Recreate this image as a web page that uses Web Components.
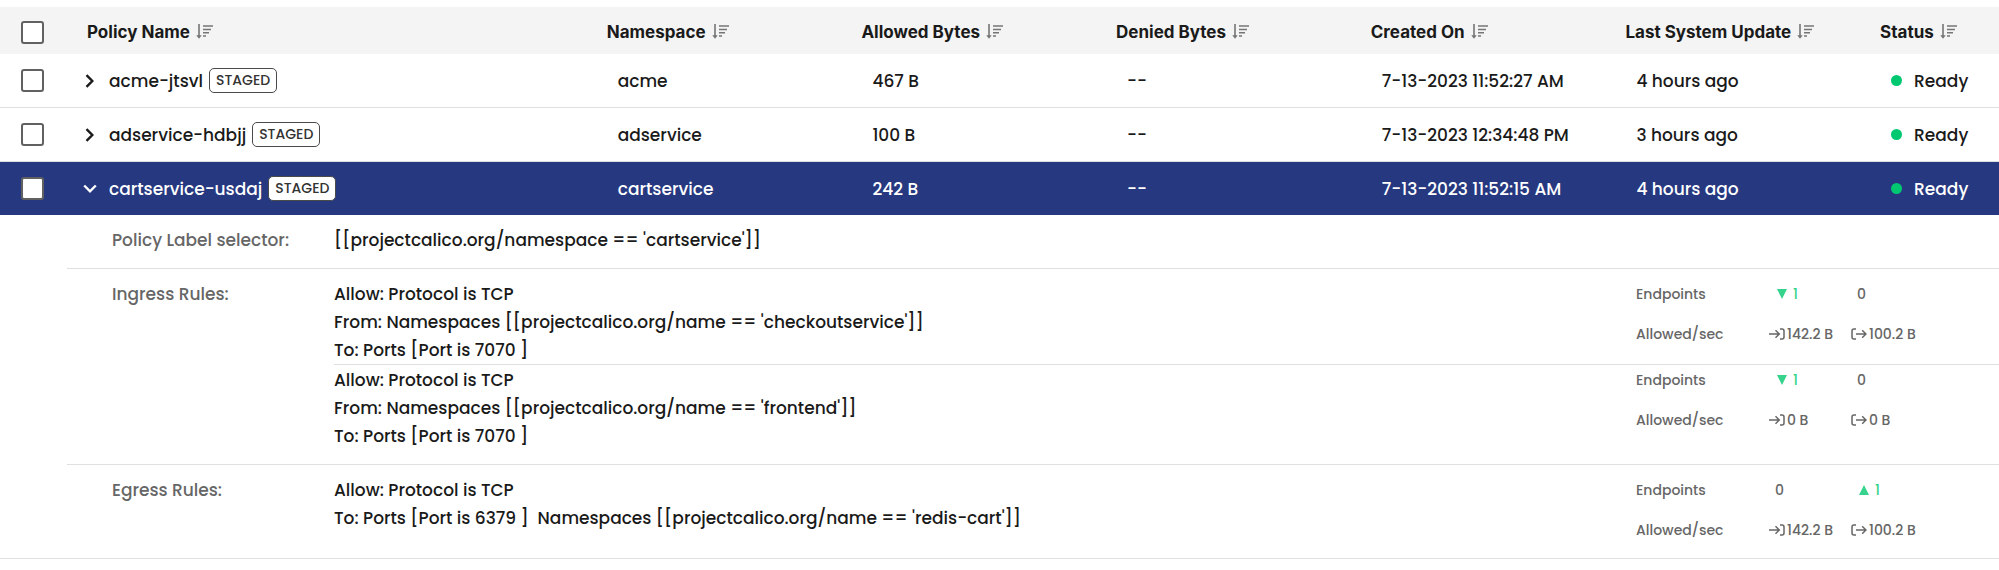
<!DOCTYPE html>
<html lang="en">
<head>
<meta charset="utf-8">
<title>Policies</title>
<style>
  :root {
    --fg: #1a1a1a;
    --fg-muted: #666666;
    --line: #e0e0e0;
    --header-bg: #f4f4f4;
    --selected: #26387f;
    --ready: #00c871;
    --change: #36d38c;
  }
  body {
    margin: 0;
    padding-top: 7px;
    background: #ffffff;
    color: var(--fg);
    font-family: Poppins, Inter, "Open Sans", sans-serif;
    font-size: 17px;
    font-weight: 500;
    line-height: 28px;
  }
</style>
</head>
<body>
<policy-table></policy-table>

<script>
const COLUMNS = [
  "Policy Name",
  "Namespace",
  "Allowed Bytes",
  "Denied Bytes",
  "Created On",
  "Last System Update",
  "Status",
];

const POLICIES = [
  {
    name: "acme-jtsvl",
    namespace: "acme",
    allowed: "467 B",
    denied: "--",
    created: "7-13-2023 11:52:27 AM",
    updated: "4 hours ago",
    status: "Ready",
  },
  {
    name: "adservice-hdbjj",
    namespace: "adservice",
    allowed: "100 B",
    denied: "--",
    created: "7-13-2023 12:34:48 PM",
    updated: "3 hours ago",
    status: "Ready",
  },
  {
    name: "cartservice-usdaj",
    namespace: "cartservice",
    allowed: "242 B",
    denied: "--",
    created: "7-13-2023 11:52:15 AM",
    updated: "4 hours ago",
    status: "Ready",
    details: {
      selector: "[[projectcalico.org/namespace == 'cartservice']]",
      ingress: [
        {
          lines: [
            "Allow: Protocol is TCP",
            "From: Namespaces [[projectcalico.org/name == 'checkoutservice']]",
            "To: Ports [Port is 7070 ]",
          ],
          stats: { down: "1", up: "0", bytesIn: "142.2 B", bytesOut: "100.2 B" },
        },
        {
          lines: [
            "Allow: Protocol is TCP",
            "From: Namespaces [[projectcalico.org/name == 'frontend']]",
            "To: Ports [Port is 7070 ]",
          ],
          stats: { down: "1", up: "0", bytesIn: "0 B", bytesOut: "0 B" },
        },
      ],
      egress: [
        {
          lines: [
            "Allow: Protocol is TCP",
            "To: Ports [Port is 6379 ]  Namespaces [[projectcalico.org/name == 'redis-cart']]",
          ],
          stats: { down: "0", up: "1", bytesIn: "142.2 B", bytesOut: "100.2 B" },
        },
      ],
    },
  },
];

class SortButton extends HTMLElement {
  connectedCallback() {
    this.attachShadow({ mode: "open" });
    this.shadowRoot.innerHTML = `
      <style>
        :host { display: inline-block; }
        button {
          display: flex;
          align-items: center;
          gap: 6px;
          padding: 0;
          border: 0;
          background: none;
          color: inherit;
          font: inherit;
          white-space: nowrap;
          cursor: pointer;
        }
        svg { flex: none; color: #757575; }
      </style>
      <button type="button">
        <slot></slot>
        <svg width="18" height="18" viewBox="0 0 18 18" fill="none" stroke="currentColor" stroke-width="1.6" aria-hidden="true">
          <path d="M3 1V14" />
          <path d="M.3 12.2H5.7L3 15.8Z" fill="currentColor" stroke="none" />
          <path d="M7 3H17M7 6.5H15M7 9.8H13M7 13H10" />
        </svg>
      </button>
    `;
  }
}

class PolicyCheckbox extends HTMLElement {
  connectedCallback() {
    this.attachShadow({ mode: "open" });
    this.shadowRoot.innerHTML = `
      <style>
        :host { display: block; }
        input {
          appearance: none;
          display: block;
          box-sizing: border-box;
          width: 23px;
          height: 23px;
          margin: 0;
          border: 2px solid #616161;
          border-radius: 3px;
          background: #ffffff;
        }
        input:checked { background: var(--selected); }
      </style>
      <input type="checkbox" aria-label="${this.getAttribute("label")}">
    `;
  }
}

class PolicyName extends HTMLElement {
  connectedCallback() {
    this.attachShadow({ mode: "open" });
    this.shadowRoot.innerHTML = `
      <style>
        :host { display: flex; align-items: center; }
        button {
          display: flex;
          justify-content: center;
          width: 16px;
          margin-right: 11px;
          padding: 0;
          border: 0;
          background: none;
          color: inherit;
        }
        svg { flex: none; }
        :host([expanded]) svg { transform: rotate(90deg); }
        .badge {
          box-sizing: border-box;
          height: 25px;
          margin-left: 6px;
          padding: 0 6px;
          border: 1px solid #4a4a4a;
          border-radius: 5px;
          background: #ffffff;
          color: #333333;
          font-size: 14px;
          line-height: 23px;
        }
      </style>
      <button type="button" aria-label="Toggle details" aria-expanded="${this.hasAttribute("expanded")}">
        <svg width="14" height="14" viewBox="0 0 14 14" fill="none" stroke="currentColor" stroke-width="2.4" aria-hidden="true">
          <path d="M3.5 1.2L9.3 7L3.5 12.8" />
        </svg>
      </button>
      <slot></slot>
      <span class="badge">STAGED</span>
    `;
  }
}

class PolicyStatus extends HTMLElement {
  connectedCallback() {
    this.attachShadow({ mode: "open" });
    this.shadowRoot.innerHTML = `
      <style>
        :host { display: flex; align-items: center; gap: 12px; }
        .dot {
          width: 11px;
          height: 11px;
          border-radius: 50%;
          background: var(--ready);
        }
      </style>
      <span class="dot"></span>
      <slot></slot>
    `;
  }
}

class RuleStats extends HTMLElement {
  set stats(stats) {
    this._stats = stats;
  }

  connectedCallback() {
    const { down, up, bytesIn, bytesOut } = this._stats;
    this.attachShadow({ mode: "open" });
    this.shadowRoot.innerHTML = `
      <style>
        :host {
          display: grid;
          grid-template-columns: 133px 82px 1fr;
          align-content: start;
          row-gap: 12px;
          color: var(--fg-muted);
          font-size: 14px;
        }
        .count, .bytes { display: flex; align-items: center; }
        .count { gap: 6px; padding-left: 6px; }
        .bytes { gap: 2px; white-space: nowrap; }
        .changed { padding-left: 8px; color: var(--change); }
      </style>
      <span>Endpoints</span>
      ${this._count(down, "M0 0H10L5 10Z")}
      ${this._count(up, "M0 10H10L5 0Z")}
      <span>Allowed/sec</span>
      <span class="bytes">
        <svg width="16" height="12" viewBox="0 0 16 12" fill="none" stroke="currentColor" stroke-width="1.5" aria-hidden="true">
          <path d="M0 6H10M6.5 2.2L10.3 6L6.5 9.8" />
          <path d="M11 .9H13Q15 .9 15 2.9V9.1Q15 11.1 13 11.1H11" />
        </svg>
        ${bytesIn}
      </span>
      <span class="bytes">
        <svg width="16" height="12" viewBox="0 0 16 12" fill="none" stroke="currentColor" stroke-width="1.5" aria-hidden="true">
          <path d="M5 .9H3Q1 .9 1 2.9V9.1Q1 11.1 3 11.1H5" />
          <path d="M5 6H15M11.2 2.2L15 6L11.2 9.8" />
        </svg>
        ${bytesOut}
      </span>
    `;
  }

  _count(value, arrow) {
    if (value === "0") return `<span class="count">0</span>`;
    return `
      <span class="count changed">
        <svg width="10" height="10" viewBox="0 0 10 10" fill="currentColor" aria-hidden="true"><path d="${arrow}" /></svg>
        ${value}
      </span>
    `;
  }
}

class PolicyRule extends HTMLElement {
  set rule(rule) {
    this._rule = rule;
  }

  connectedCallback() {
    this.attachShadow({ mode: "open" });
    this.shadowRoot.innerHTML = `
      <style>
        :host { display: flex; }
        .lines { flex: 1; }
        .line { white-space: pre; }
        rule-stats { flex: none; width: 363px; }
      </style>
      <div class="lines">
        ${this._rule.lines.map((line) => `<div class="line">${line}</div>`).join("")}
      </div>
    `;
    const stats = document.createElement("rule-stats");
    stats.stats = this._rule.stats;
    this.shadowRoot.append(stats);
  }
}

class DetailSection extends HTMLElement {
  connectedCallback() {
    this.attachShadow({ mode: "open" });
    this.shadowRoot.innerHTML = `
      <style>
        :host {
          display: flex;
          margin-left: 67px;
          padding: 11px 0 14px 45px;
          border-bottom: 1px solid var(--line);
        }
        :host(:last-child) { border-bottom: 0; }
        .label { flex: none; width: 222px; color: var(--fg-muted); }
        .content { flex: 1; }
        ::slotted(policy-rule:not(:last-child)) {
          margin-bottom: 1px;
          border-bottom: 1px solid var(--line);
        }
      </style>
      <div class="label">${this.getAttribute("label")}</div>
      <div class="content"><slot></slot></div>
    `;
  }
}

class PolicyDetails extends HTMLElement {
  set details(details) {
    this._details = details;
  }

  connectedCallback() {
    this.attachShadow({ mode: "open" });
    this.shadowRoot.innerHTML = `
      <style>
        :host { display: block; }
      </style>
      <detail-section label="Policy Label selector:">${this._details.selector}</detail-section>
      <detail-section id="ingress" label="Ingress Rules:"></detail-section>
      <detail-section id="egress" label="Egress Rules:"></detail-section>
    `;
    this._addRules("ingress");
    this._addRules("egress");
  }

  _addRules(id) {
    const section = this.shadowRoot.getElementById(id);
    for (const rule of this._details[id]) {
      const el = document.createElement("policy-rule");
      el.rule = rule;
      section.append(el);
    }
  }
}

class PolicyTable extends HTMLElement {
  connectedCallback() {
    this.attachShadow({ mode: "open" });
    this.shadowRoot.innerHTML = `
      <style>
        :host { display: block; }
        table {
          width: 100%;
          border-collapse: separate;
          border-spacing: 0;
          table-layout: fixed;
        }
        .col-check { width: 67px; }
        .col-name { width: 26%; }
        .col-data { width: 12.74%; }
        th {
          height: 44px;
          padding: 3px 0 0 20px;
          background: var(--header-bg);
          font-family: Inter, sans-serif;
          font-size: 17px;
          font-weight: 700;
          text-align: left;
        }
        td {
          height: 53px;
          padding: 0 0 0 31px;
          border-bottom: 1px solid var(--line);
          white-space: nowrap;
        }
        th:first-child, td:first-child { padding-left: 21px; }
        td:nth-child(2) { padding-left: 15px; }
        .selected td {
          border-bottom: 0;
          background: var(--selected);
          color: #ffffff;
        }
        td.details { height: auto; padding: 0; }
      </style>
      <table>
        <colgroup>
          <col class="col-check">
          <col class="col-name">
          <col class="col-data" span="5">
          <col>
        </colgroup>
        <thead>
          <tr>
            <th><policy-checkbox label="Select all policies"></policy-checkbox></th>
            ${COLUMNS.map((name) => `<th scope="col"><sort-button>${name}</sort-button></th>`).join("")}
          </tr>
        </thead>
        <tbody></tbody>
      </table>
    `;

    this._body = this.shadowRoot.querySelector("tbody");
    for (const policy of POLICIES) {
      this._addPolicy(policy);
    }
  }

  _addPolicy(policy) {
    const row = this._body.insertRow();
    row.classList.toggle("selected", Boolean(policy.details));
    row.innerHTML = `
      <td><policy-checkbox label="Select ${policy.name}"></policy-checkbox></td>
      <td><policy-name ${policy.details ? "expanded" : ""}>${policy.name}</policy-name></td>
      <td>${policy.namespace}</td>
      <td>${policy.allowed}</td>
      <td>${policy.denied}</td>
      <td>${policy.created}</td>
      <td>${policy.updated}</td>
      <td><policy-status>${policy.status}</policy-status></td>
    `;

    if (!policy.details) return;
    const cell = this._body.insertRow().insertCell();
    cell.className = "details";
    cell.colSpan = COLUMNS.length + 1;
    const details = document.createElement("policy-details");
    details.details = policy.details;
    cell.append(details);
  }
}

customElements.define("sort-button", SortButton);
customElements.define("policy-checkbox", PolicyCheckbox);
customElements.define("policy-name", PolicyName);
customElements.define("policy-status", PolicyStatus);
customElements.define("rule-stats", RuleStats);
customElements.define("policy-rule", PolicyRule);
customElements.define("detail-section", DetailSection);
customElements.define("policy-details", PolicyDetails);
customElements.define("policy-table", PolicyTable);
</script>
</body>
</html>
